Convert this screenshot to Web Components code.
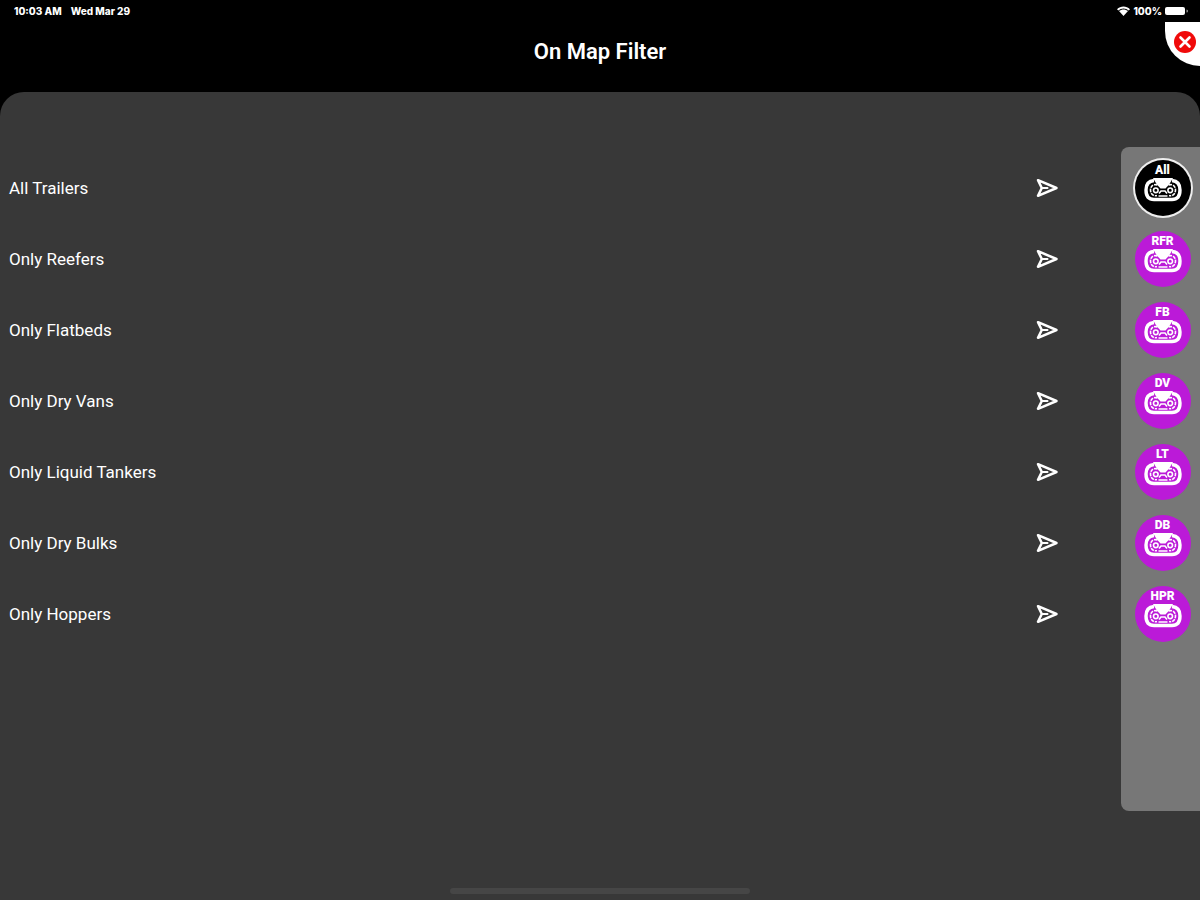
<!DOCTYPE html>
<html lang="en">
<head>
<meta charset="utf-8">
<meta name="viewport" content="width=device-width, initial-scale=1">
<title>On Map Filter</title>
<style>
    html, body {
        height: 100%;
        margin: 0;
    }

    body {
        background: #000;
        color: #fff;
        font-family: Roboto, "Liberation Sans", sans-serif;
        --sheet: #383838;
        --rail: #777;
        --accent: #bb1ad8;
        --row: 71px;
    }
</style>
</head>
<body>

<map-filter-page>
    <status-bar slot="status" data-time="10:03 AM" data-date="Wed Mar 29" data-battery="100%"></status-bar>
    <page-header slot="header">On Map Filter</page-header>

    <filter-row>All Trailers</filter-row>
    <filter-row>Only Reefers</filter-row>
    <filter-row>Only Flatbeds</filter-row>
    <filter-row>Only Dry Vans</filter-row>
    <filter-row>Only Liquid Tankers</filter-row>
    <filter-row>Only Dry Bulks</filter-row>
    <filter-row>Only Hoppers</filter-row>

    <trailer-button slot="rail" active>All</trailer-button>
    <trailer-button slot="rail">RFR</trailer-button>
    <trailer-button slot="rail">FB</trailer-button>
    <trailer-button slot="rail">DV</trailer-button>
    <trailer-button slot="rail">LT</trailer-button>
    <trailer-button slot="rail">DB</trailer-button>
    <trailer-button slot="rail">HPR</trailer-button>
</map-filter-page>

<script>
function createTemplate(html) {
    const template = document.createElement("template");
    template.innerHTML = html;
    return template;
}

class BaseElement extends HTMLElement {
    constructor() {
        super();
        this.attachShadow({ mode: "open" });
        this.shadowRoot.append(this.constructor.template.content.cloneNode(true));
    }
}


// Page frame
customElements.define("map-filter-page", class extends BaseElement {

    static template = createTemplate(/*html*/ `
    <style>
        :host {
            display: flex;
            flex-direction: column;
            min-height: 100vh;
        }

        main {
            flex: 1;
            display: flex;
            flex-direction: column;
            background: var(--sheet);
            border-radius: 24px 24px 0 0;
            padding-top: 55px;
        }

        .columns {
            flex: 1;
            display: flex;
            align-items: stretch;
        }

        .list {
            flex: 1;
            padding-top: 5px;
        }

        nav {
            box-sizing: border-box;
            width: 79px;
            padding: 5px 0 0 4px;
            background: var(--rail);
            border-radius: 8px 0 0 8px;
        }

        footer {
            display: flex;
            justify-content: center;
            padding: 77px 0 6px;
        }

        .home {
            width: 25%;
            height: 6px;
            border-radius: 3px;
            background: #464646;
        }
    </style>

    <slot name="status"></slot>
    <slot name="header"></slot>
    <main>
        <div class="columns">
            <div class="list"><slot></slot></div>
            <nav aria-label="Trailer types"><slot name="rail"></slot></nav>
        </div>
        <footer><div class="home"></div></footer>
    </main>
    `);

});


// Time, date, wifi and battery
customElements.define("status-bar", class extends BaseElement {

    static template = createTemplate(/*html*/ `
    <style>
        :host {
            display: flex;
            align-items: center;
            justify-content: space-between;
            height: 22px;
            padding: 0 12px 0 14px;
            font-family: Inter, "Liberation Sans", sans-serif;
            font-size: 10px;
            font-weight: 800;
        }

        div {
            display: flex;
            align-items: center;
        }

        .left {
            gap: 9px;
        }

        .right {
            gap: 3px;
        }

        svg {
            display: block;
            fill: currentColor;
        }
    </style>

    <div class="left">
        <span id="time"></span>
        <span id="date"></span>
    </div>
    <div class="right">
        <svg width="13" height="10" viewBox="0 0 13 10" aria-hidden="true">
            <path d="M0 3.200C3.600-.4 9.400-.4 13 3.200L11.700 4.600C8.800 1.900 4.200 1.900 1.300 4.600z"/>
            <path d="M2 5.100c2.500-2.300 6.500-2.300 9 0L6.500 10z"/>
        </svg>
        <span id="battery"></span>
        <svg width="23" height="8" viewBox="0 0 23 8" aria-hidden="true">
            <rect width="20" height="8" rx="2"/>
            <path d="M21.500 2.500a1.500 1.500 0 0 1 0 3z" opacity=".6"/>
        </svg>
    </div>
    `);

    connectedCallback() {
        for (const name of ["time", "date", "battery"]) {
            this.shadowRoot.getElementById(name).textContent = this.dataset[name];
        }
    }

});


// Title with the close button in the corner
customElements.define("page-header", class extends BaseElement {

    static template = createTemplate(/*html*/ `
    <style>
        :host {
            display: grid;
            grid-template-columns: 1fr auto 1fr;
            height: 70px;
        }

        h1 {
            grid-column: 2;
            margin: 0;
            padding-top: 17px;
            font-size: 22px;
            line-height: 26px;
            font-weight: 600;
        }

        button {
            justify-self: end;
            display: flex;
            align-items: center;
            box-sizing: border-box;
            width: 35px;
            height: 44px;
            padding: 0 0 4px 9px;
            border: 0;
            border-radius: 0 0 0 35px;
            background: #fff;
            cursor: pointer;
        }
    </style>

    <h1><slot></slot></h1>
    <button type="button" aria-label="Close">
        <svg width="22" height="22" viewBox="0 0 22 22" aria-hidden="true">
            <circle cx="11" cy="11" r="11" fill="#f00a0a"/>
            <path d="M6.500 6.500l9 9M15.500 6.500l-9 9" stroke="#fff" stroke-width="2.600" stroke-linecap="round"/>
        </svg>
    </button>
    `);

});


// One filter with its send button
customElements.define("filter-row", class extends BaseElement {

    static template = createTemplate(/*html*/ `
    <style>
        :host {
            display: flex;
            align-items: center;
            justify-content: space-between;
            height: var(--row);
            padding: 0 58px 0 9px;
            font-size: 17px;
            line-height: 20px;
        }

        button {
            display: flex;
            padding: 4px;
            border: 0;
            background: none;
            color: inherit;
            cursor: pointer;
        }
    </style>

    <span id="label"><slot></slot></span>
    <button type="button" aria-labelledby="label">
        <svg width="24" height="22" viewBox="0 0 24 22" fill="none" stroke="currentColor"
            stroke-width="2.500" stroke-linejoin="round" stroke-linecap="round" aria-hidden="true">
            <path d="M3 3.200L21.500 11 3 18.800 6.800 11z"/>
            <path d="M7 11H12.500" stroke-width="2"/>
        </svg>
    </button>
    `);

});


// Round trailer shortcut
customElements.define("trailer-button", class extends BaseElement {

    static template = createTemplate(/*html*/ `
    <style>
        :host {
            display: flex;
            align-items: center;
            justify-content: center;
            height: var(--row);
        }

        button {
            display: flex;
            flex-direction: column;
            align-items: center;
            box-sizing: border-box;
            width: 56px;
            height: 56px;
            padding: 4px 0 0;
            border: 0;
            border-radius: 50%;
            background: var(--accent);
            color: #fff;
            font: 900 12px/13px Roboto, "Liberation Sans", sans-serif;
            cursor: pointer;
        }

        :host([active]) button {
            background: #000;
            box-shadow: 0 0 0 2px #eee;
        }

        svg {
            display: block;
        }
    </style>

    <button type="button">
        <slot></slot>
        <svg width="38" height="25" viewBox="0 0 38 25" fill="none" stroke="currentColor" aria-hidden="true">
            <path d="M10 3.500C4.500 4 2 7.500 2 13 2 19 4.500 22.500 10 22.500h18c5.500 0 8-3.500 8-9.500C36 7.500 33.500 4 28 3.500" stroke-width="3.400"/>
            <path d="M9 1h20l-3.500 6L21.500 11.500h-5L12.500 7z" fill="currentColor" stroke="none"/>
            <path d="M13.500 8C9 6.500 6.500 9.500 6.500 13S9 19.500 13 18.500M24.500 8C29 6.500 31.500 9.500 31.500 13S29 19.500 25 18.500" stroke-width="1.600" stroke-dasharray="3.500 1"/>
            <circle cx="11.800" cy="13.300" r="2.300" stroke-width="1.600"/>
            <circle cx="26.200" cy="13.300" r="2.300" stroke-width="1.600"/>
            <path d="M15 16.500l2-2.500h4l2 2.500M14.500 19h9" stroke-width="1.600"/>
        </svg>
    </button>
    `);

    connectedCallback() {
        const button = this.shadowRoot.querySelector("button");
        button.setAttribute("aria-pressed", this.hasAttribute("active"));
    }

});
</script>
</body>
</html>
